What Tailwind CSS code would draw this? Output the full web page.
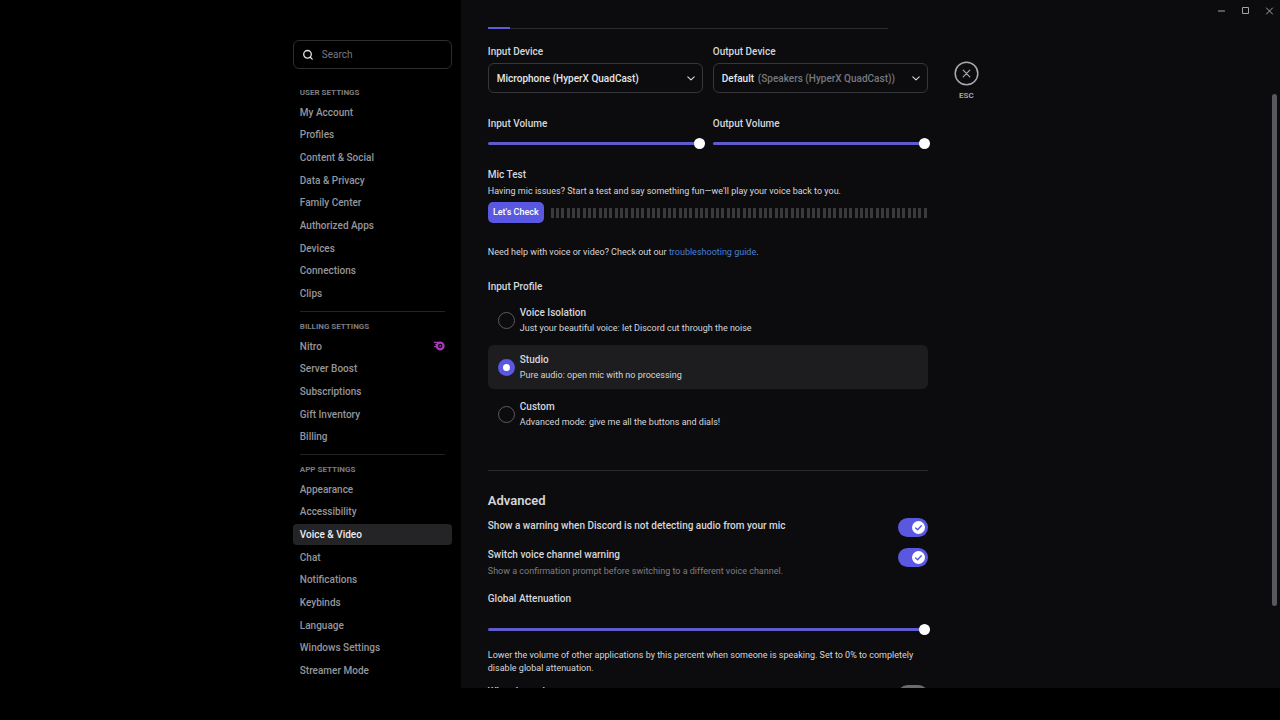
<!DOCTYPE html>
<html lang="en">
<head>
  <meta charset="UTF-8">
  <meta name="viewport" content="width=device-width, initial-scale=1">
  <title>Voice &amp; Video Settings</title>
  <script src="https://cdn.jsdelivr.net/npm/@tailwindcss/browser@4"></script>
</head>
<body class="bg-black h-screen overflow-hidden pb-8 flex font-[Roboto,sans-serif] text-[10px] text-[#d6d6da]">

  <!-- Sidebar -->
  <aside class="w-[36%] shrink-0 flex justify-end pr-[9px] pt-10">
    <div class="w-[159px]">
      <div class="flex items-center gap-2 h-[29px] px-2 rounded-md border border-[#2e2e31]">
        <svg class="size-3 shrink-0" viewBox="0 0 12 12" fill="none" stroke="#e4e4e7" stroke-width="1.3" stroke-linecap="round"><circle cx="5.5" cy="5.3" r="3.8"/><path d="M8.3 8.2 10.2 10.1"/></svg>
        <input type="text" aria-label="Search" placeholder="Search" class="w-full bg-transparent outline-none text-[10px] placeholder:text-[#77787e]">
      </div>

      <nav class="mt-4 text-[#95969c] font-medium">
        <h2 class="px-[7px] text-[8px] leading-4 font-bold text-[#7c7d83]">USER SETTINGS</h2>
        <div class="h-51 grid auto-rows-fr">
          <a href="#" class="flex items-center px-[7px]">My Account</a>
          <a href="#" class="flex items-center px-[7px]">Profiles</a>
          <a href="#" class="flex items-center px-[7px]">Content &amp; Social</a>
          <a href="#" class="flex items-center px-[7px]">Data &amp; Privacy</a>
          <a href="#" class="flex items-center px-[7px]">Family Center</a>
          <a href="#" class="flex items-center px-[7px]">Authorized Apps</a>
          <a href="#" class="flex items-center px-[7px]">Devices</a>
          <a href="#" class="flex items-center px-[7px]">Connections</a>
          <a href="#" class="flex items-center px-[7px]">Clips</a>
        </div>

        <hr class="mx-[7px] mt-1.5 mb-[7px] border-[#232325]">
        <h2 class="px-[7px] text-[8px] leading-4 font-bold text-[#7c7d83]">BILLING SETTINGS</h2>
        <div class="h-[113px] grid auto-rows-fr">
          <a href="#" class="flex items-center justify-between px-[7px]">Nitro
            <svg class="w-3 h-[10px]" viewBox="0 0 12 10" fill="none" stroke="#a63ab8"><circle cx="7.2" cy="5" r="3.3" stroke-width="2.3"/><path d="M1 1.4h5M2.2 3.6h2.2M1.2 5.6h2" stroke-width="1.2"/><circle cx="7.2" cy="5" r=".9" fill="#a63ab8" stroke="none"/></svg>
          </a>
          <a href="#" class="flex items-center px-[7px]">Server Boost</a>
          <a href="#" class="flex items-center px-[7px]">Subscriptions</a>
          <a href="#" class="flex items-center px-[7px]">Gift Inventory</a>
          <a href="#" class="flex items-center px-[7px]">Billing</a>
        </div>

        <hr class="mx-[7px] mt-1.5 mb-[7px] border-[#232325]">
        <h2 class="px-[7px] text-[8px] leading-4 font-bold text-[#7c7d83]">APP SETTINGS</h2>
        <div class="h-51 grid auto-rows-fr">
          <a href="#" class="flex items-center px-[7px]">Appearance</a>
          <a href="#" class="flex items-center px-[7px]">Accessibility</a>
          <a href="#" aria-current="page" class="flex items-center px-[7px] my-px rounded bg-[#242427] text-[#ececef]">Voice &amp; Video</a>
          <a href="#" class="flex items-center px-[7px]">Chat</a>
          <a href="#" class="flex items-center px-[7px]">Notifications</a>
          <a href="#" class="flex items-center px-[7px]">Keybinds</a>
          <a href="#" class="flex items-center px-[7px]">Language</a>
          <a href="#" class="flex items-center px-[7px]">Windows Settings</a>
          <a href="#" class="flex items-center px-[7px]">Streamer Mode</a>
        </div>
      </nav>
    </div>
  </aside>

  <!-- Settings panel -->
  <div class="relative flex-1 flex items-start bg-[#0c0c0e] pl-[27px] overflow-hidden">
    <main class="w-[440px] pt-[27px]">
      <div class="mr-10 border-b border-[#2b2b2e]"><div class="w-[22px] h-0.5 -mb-px bg-[#5c5bd8]"></div></div>

      <div class="mt-3.5 grid grid-cols-2 gap-x-2.5">
        <div>
          <label for="input-device" class="block leading-[18px] font-medium">Input Device</label>
          <div class="relative mt-0.5">
            <select id="input-device" class="appearance-none w-full h-[30px] px-2 rounded-md border border-[#37373b] bg-transparent font-medium text-[#e6e6e9]">
              <option>Microphone (HyperX QuadCast)</option>
            </select>
            <svg class="absolute right-2 top-[11px] size-2 pointer-events-none" viewBox="0 0 8 8" fill="none" stroke="#dcdce0" stroke-width="1.1" stroke-linecap="round" stroke-linejoin="round"><path d="M.8 2.8 4 5.8 7.2 2.8"/></svg>
          </div>
        </div>
        <div>
          <label for="output-device" class="block leading-[18px] font-medium">Output Device</label>
          <div class="relative mt-0.5">
            <select id="output-device" class="appearance-none w-full h-[30px] px-2 rounded-md border border-[#37373b] bg-transparent font-medium text-[#e6e6e9]">
              <option>Default</option>
            </select>
            <span class="absolute left-[45px] top-0 leading-[31px] font-medium text-[#77787e] pointer-events-none">(Speakers (HyperX QuadCast))</span>
            <svg class="absolute right-2 top-[11px] size-2 pointer-events-none" viewBox="0 0 8 8" fill="none" stroke="#dcdce0" stroke-width="1.1" stroke-linecap="round" stroke-linejoin="round"><path d="M.8 2.8 4 5.8 7.2 2.8"/></svg>
          </div>
        </div>
        <div class="mt-[22px] -mr-0.5">
          <label for="input-volume" class="block leading-[18px] font-medium">Input Volume</label>
          <input id="input-volume" type="range" value="100" class="block mt-[5px] w-full h-[11px] appearance-none bg-transparent [&::-webkit-slider-runnable-track]:h-[3px] [&::-webkit-slider-runnable-track]:rounded-full [&::-webkit-slider-runnable-track]:bg-[#5f5cd0] [&::-webkit-slider-thumb]:appearance-none [&::-webkit-slider-thumb]:size-[11px] [&::-webkit-slider-thumb]:-mt-1 [&::-webkit-slider-thumb]:rounded-full [&::-webkit-slider-thumb]:bg-white">
        </div>
        <div class="mt-[22px] -mr-0.5">
          <label for="output-volume" class="block leading-[18px] font-medium">Output Volume</label>
          <input id="output-volume" type="range" value="100" class="block mt-[5px] w-full h-[11px] appearance-none bg-transparent [&::-webkit-slider-runnable-track]:h-[3px] [&::-webkit-slider-runnable-track]:rounded-full [&::-webkit-slider-runnable-track]:bg-[#5f5cd0] [&::-webkit-slider-thumb]:appearance-none [&::-webkit-slider-thumb]:size-[11px] [&::-webkit-slider-thumb]:-mt-1 [&::-webkit-slider-thumb]:rounded-full [&::-webkit-slider-thumb]:bg-white">
        </div>
      </div>

      <!-- Mic test -->
      <h3 class="mt-[17px] leading-[18px] font-medium">Mic Test</h3>
      <p class="text-[9px] leading-[14px]">Having mic issues? Start a test and say something fun—we'll play your voice back to you.</p>
      <div class="mt-1 flex items-center gap-[7px]">
        <button class="w-14 h-[21px] rounded-[5px] bg-[#5a58e0] text-[9px] font-medium text-white whitespace-nowrap">Let's Check</button>
        <div id="meter" class="flex-1 flex justify-between h-2.5"></div>
      </div>
      <p class="mt-[22px] text-[9px] leading-[14px]">Need help with voice or video? Check out our <a href="#" class="text-[#4a7fd0]">troubleshooting guide</a>.</p>

      <!-- Input profile -->
      <h3 class="mt-[19px] leading-[18px] font-medium">Input Profile</h3>
      <div class="mt-0.5 space-y-[3px]">
        <label class="flex items-center gap-[5px] h-11 pl-2.5 rounded-md has-checked:bg-[#1d1d20]">
          <input type="radio" name="profile" class="appearance-none size-[17px] rounded-full border border-[#5b5b60] checked:border-[5px] checked:border-[#5a58e0] checked:bg-white">
          <span>
            <span class="block leading-4 font-medium">Voice Isolation</span>
            <span class="block text-[9px] leading-[14px]">Just your beautiful voice: let Discord cut through the noise</span>
          </span>
        </label>
        <label class="flex items-center gap-[5px] h-11 pl-2.5 rounded-md has-checked:bg-[#1d1d20]">
          <input type="radio" name="profile" checked class="appearance-none size-[17px] rounded-full border border-[#5b5b60] checked:border-[5px] checked:border-[#5a58e0] checked:bg-white">
          <span>
            <span class="block leading-4 font-medium">Studio</span>
            <span class="block text-[9px] leading-[14px]">Pure audio: open mic with no processing</span>
          </span>
        </label>
        <label class="flex items-center gap-[5px] h-11 pl-2.5 rounded-md has-checked:bg-[#1d1d20]">
          <input type="radio" name="profile" class="appearance-none size-[17px] rounded-full border border-[#5b5b60] checked:border-[5px] checked:border-[#5a58e0] checked:bg-white">
          <span>
            <span class="block leading-4 font-medium">Custom</span>
            <span class="block text-[9px] leading-[14px]">Advanced mode: give me all the buttons and dials!</span>
          </span>
        </label>
      </div>

      <hr class="mt-[34px] border-[#2b2b2e]">

      <!-- Advanced -->
      <h2 class="mt-5 text-[13px] leading-5 font-semibold">Advanced</h2>
      <label class="mt-1.5 flex justify-between items-start">
        <span class="leading-[18px] font-medium">Show a warning when Discord is not detecting audio from your mic</span>
        <span class="relative mt-px">
          <input type="checkbox" role="switch" checked class="block appearance-none w-[30px] h-[19px] rounded-full bg-[#6a6a70] checked:bg-[#5a58e0]">
          <svg class="absolute right-[3px] top-[3px] size-[13px]" viewBox="0 0 13 13"><circle cx="6.5" cy="6.5" r="6.5" fill="#fff"/><path d="M3.6 7 5.6 8.8 9.3 4.8" fill="none" stroke="#5a58e0" stroke-width="1.4" stroke-linecap="round" stroke-linejoin="round"/></svg>
        </span>
      </label>
      <label class="mt-[9px] flex justify-between items-start">
        <span>
          <span class="block leading-[18px] font-medium">Switch voice channel warning</span>
          <span class="block text-[9px] leading-[14px] text-[#7d7e84]">Show a confirmation prompt before switching to a different voice channel.</span>
        </span>
        <span class="relative mt-0.5">
          <input type="checkbox" role="switch" checked class="block appearance-none w-[30px] h-[19px] rounded-full bg-[#6a6a70] checked:bg-[#5a58e0]">
          <svg class="absolute right-[3px] top-[3px] size-[13px]" viewBox="0 0 13 13"><circle cx="6.5" cy="6.5" r="6.5" fill="#fff"/><path d="M3.6 7 5.6 8.8 9.3 4.8" fill="none" stroke="#5a58e0" stroke-width="1.4" stroke-linecap="round" stroke-linejoin="round"/></svg>
        </span>
      </label>

      <div class="mt-3 -mr-0.5">
        <label for="attenuation" class="block leading-[18px] font-medium">Global Attenuation</label>
        <input id="attenuation" type="range" value="100" class="block mt-4 w-full h-[11px] appearance-none bg-transparent [&::-webkit-slider-runnable-track]:h-[3px] [&::-webkit-slider-runnable-track]:rounded-full [&::-webkit-slider-runnable-track]:bg-[#5f5cd0] [&::-webkit-slider-thumb]:appearance-none [&::-webkit-slider-thumb]:size-[11px] [&::-webkit-slider-thumb]:-mt-1 [&::-webkit-slider-thumb]:rounded-full [&::-webkit-slider-thumb]:bg-white">
      </div>
      <p class="mt-[14px] text-[9px] leading-[13px]">Lower the volume of other applications by this percent when someone is speaking. Set to 0% to completely disable global attenuation.</p>
      <label class="mt-2 flex justify-between items-start">
        <span class="leading-[18px] font-medium">When I speak</span>
        <span class="relative mt-0.5">
          <input type="checkbox" role="switch" class="block appearance-none w-[30px] h-[19px] rounded-full bg-[#6a6a70] checked:bg-[#5a58e0]">
          <span class="absolute left-[3px] top-[3px] size-[13px] rounded-full bg-white"></span>
        </span>
      </label>
    </main>

    <button class="ml-[26px] mt-[61px] flex flex-col items-center text-[#a9aab0]">
      <svg class="size-[25px]" viewBox="0 0 25 25" fill="none" stroke="currentColor"><circle cx="12.5" cy="12.5" r="11.3" stroke-width="1.5"/><path d="M9.2 9.2l6.6 6.6M15.8 9.2l-6.6 6.6" stroke-width="1.2" stroke-linecap="round"/></svg>
      <span class="mt-0.5 text-[8px] leading-4 font-semibold">ESC</span>
    </button>

    <!-- Window controls -->
    <div class="absolute top-1.5 right-1.5 flex gap-[15px] text-[#a4a4a8]">
      <button aria-label="Minimize"><svg class="size-[9px]" viewBox="0 0 9 9" stroke="currentColor"><path d="M1 5h7"/></svg></button>
      <button aria-label="Maximize"><svg class="size-[9px]" viewBox="0 0 9 9" fill="none" stroke="currentColor"><path d="M1.5 1.5h6v6h-6z"/></svg></button>
      <button aria-label="Close"><svg class="size-[9px]" viewBox="0 0 9 9" stroke="currentColor"><path d="M1.2 1.7l6.6 6.6M7.8 1.7 1.2 8.3"/></svg></button>
    </div>

    <!-- Scrollbar -->
    <div class="absolute right-[3px] top-[94px] w-[5px] h-128 rounded-full bg-[#58585d]"></div>
  </div>

  <script>
    const meter = document.getElementById('meter');
    for (let i = 0; i < 71; i++) {
      const bar = document.createElement('span');
      bar.className = 'w-[3px] bg-[#3a3a3d]';
      meter.appendChild(bar);
    }
  </script>
</body>
</html>
